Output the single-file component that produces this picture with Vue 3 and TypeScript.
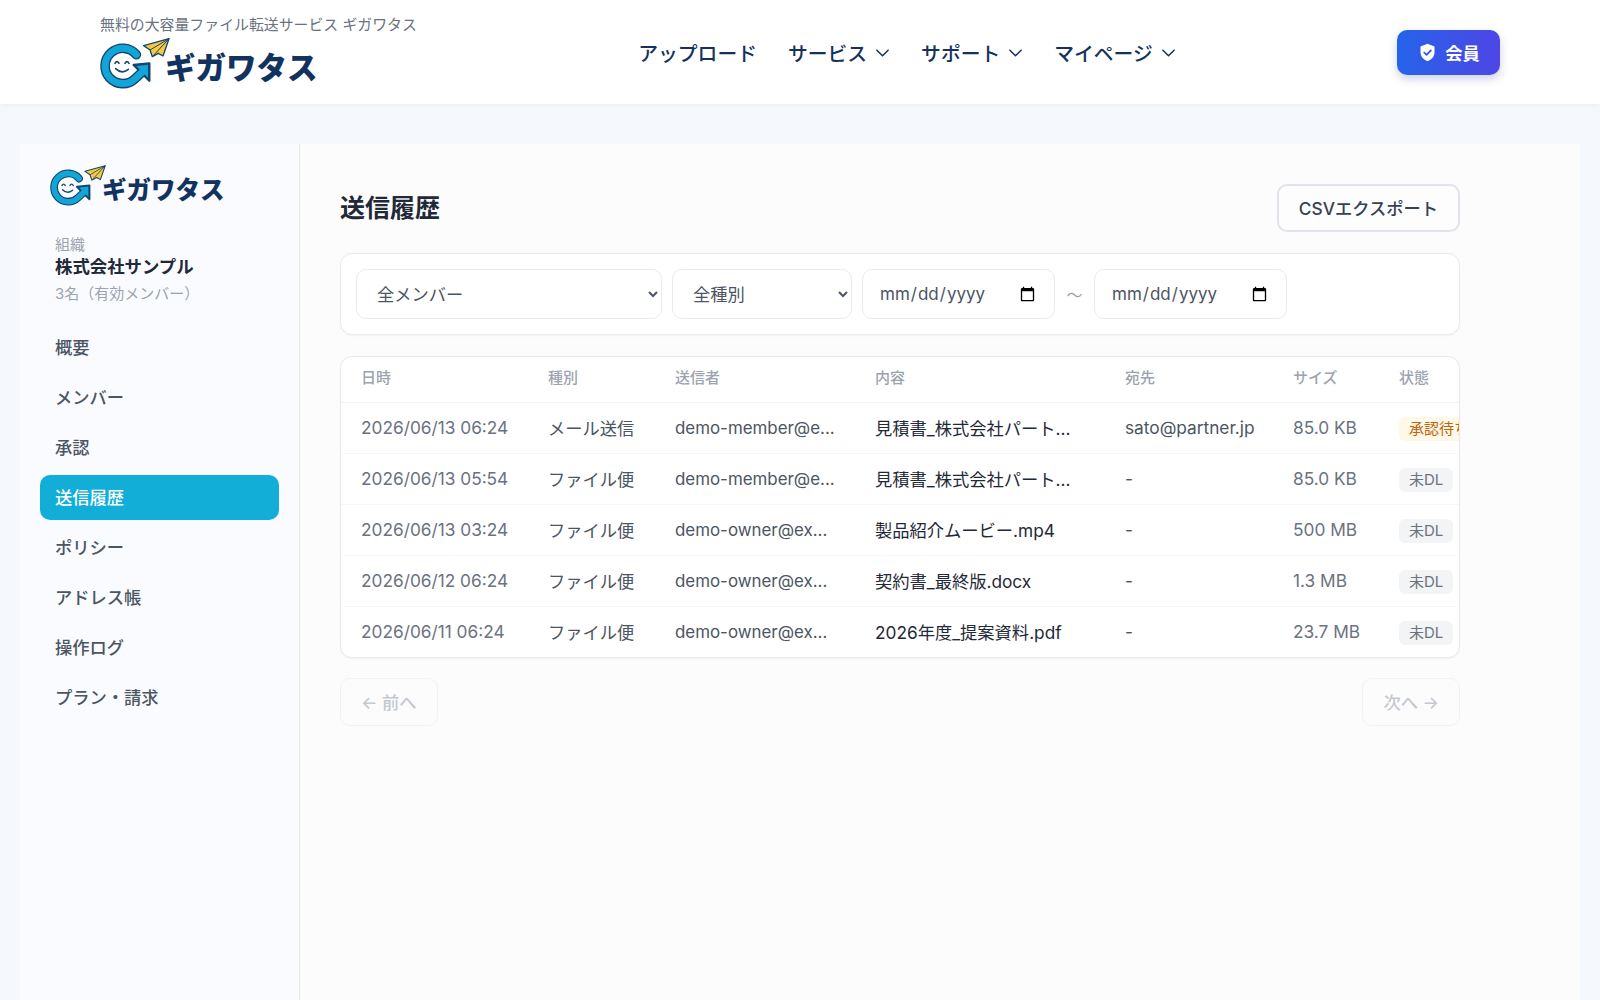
<script setup lang="ts">
interface Row { date: string; kind: string; sender: string; content: string; to: string; size: string; status: string; warn?: boolean }
const navItems = [
  { label: 'アップロード', menu: false },
  { label: 'サービス', menu: true },
  { label: 'サポート', menu: true },
  { label: 'マイページ', menu: true },
]
const sideItems = ['概要', 'メンバー', '承認', '送信履歴', 'ポリシー', 'アドレス帳', '操作ログ', 'プラン・請求']
const heads = ['日時', '種別', '送信者', '内容', '宛先', 'サイズ', '状態']
const rows: Row[] = [
  { date: '2026/06/13 06:24', kind: 'メール送信', sender: 'demo-member@e...', content: '見積書_株式会社パート...', to: 'sato@partner.jp', size: '85.0 KB', status: '承認待ち', warn: true },
  { date: '2026/06/13 05:54', kind: 'ファイル便', sender: 'demo-member@e...', content: '見積書_株式会社パート...', to: '-', size: '85.0 KB', status: '未DL' },
  { date: '2026/06/13 03:24', kind: 'ファイル便', sender: 'demo-owner@ex...', content: '製品紹介ムービー.mp4', to: '-', size: '500 MB', status: '未DL' },
  { date: '2026/06/12 06:24', kind: 'ファイル便', sender: 'demo-owner@ex...', content: '契約書_最終版.docx', to: '-', size: '1.3 MB', status: '未DL' },
  { date: '2026/06/11 06:24', kind: 'ファイル便', sender: 'demo-owner@ex...', content: '2026年度_提案資料.pdf', to: '-', size: '23.7 MB', status: '未DL' },
]
</script>

<template>
  <div class="page">
    <header class="topbar">
      <div class="topbar-inner">
        <div class="brand">
          <p class="tagline">無料の大容量ファイル転送サービス ギガワタス</p>
          <div class="logo logo-lg">
            <svg class="mark" viewBox="0 0 270 180" aria-hidden="true">
              <g id="gmark">
                <path d="M124 62A53 53 0 1 0 120 134L146 110" fill="none" stroke="#12466e" stroke-width="29" stroke-linecap="round" stroke-linejoin="round" />
                <path d="M163 88 116 93 163 140Z" fill="#12466e" stroke="#12466e" stroke-width="7" stroke-linejoin="round" />
                <path d="M124 62A53 53 0 1 0 120 134L146 110" fill="none" stroke="#12a5d8" stroke-width="21" stroke-linecap="round" stroke-linejoin="round" />
                <path d="M159 92 124 96 159 131Z" fill="#12a5d8" />
                <path d="M60 88Q66 78 72 88M90 88Q96 78 102 88M62 104Q80 122 100 106" fill="none" stroke="#12466e" stroke-width="5" stroke-linecap="round" />
                <path d="M222 14 146 35 165 48 172 68 190 58 204 66Z" fill="#f8c93e" stroke="#12466e" stroke-width="4" stroke-linejoin="round" />
                <path d="M222 14 165 48M222 14 172 68" fill="none" stroke="#12466e" stroke-width="3" />
              </g>
            </svg>
            <span class="logo-text">ギガワタス</span>
          </div>
        </div>
        <nav class="topnav">
          <a v-for="item in navItems" :key="item.label" class="topnav-link">
            {{ item.label }}
            <svg v-if="item.menu" class="chev" viewBox="0 0 16 16" aria-hidden="true"><path d="M2 5.500 8 11.500l6-6" fill="none" stroke="currentColor" stroke-width="1.6" stroke-linecap="round" stroke-linejoin="round" /></svg>
          </a>
        </nav>
        <button class="member" type="button">
          <svg class="shield" viewBox="0 0 24 24" aria-hidden="true">
            <path d="M12 2 20 5v6.500c0 5-3.300 8.800-8 10.500-4.700-1.700-8-5.500-8-10.500V5Z" fill="#fff" />
            <path d="m8.200 12 2.700 2.700 5-5.200" fill="none" stroke="#3257e6" stroke-width="2" stroke-linecap="round" stroke-linejoin="round" />
          </svg>
          会員
        </button>
      </div>
    </header>

    <div class="shell">
      <aside class="sidebar">
        <div class="logo logo-sm">
          <svg class="mark" viewBox="0 0 270 180" aria-hidden="true"><use href="#gmark" /></svg>
          <span class="logo-text">ギガワタス</span>
        </div>
        <div class="org">
          <div class="org-label">組織</div>
          <div class="org-name">株式会社サンプル</div>
          <div class="org-count">3名（有効メンバー）</div>
        </div>
        <nav class="sidenav">
          <a v-for="item in sideItems" :key="item" class="sidenav-link" :class="{ active: item === '送信履歴' }">{{ item }}</a>
        </nav>
      </aside>

      <main class="content">
        <div class="content-inner">
          <div class="title-row">
            <h1>送信履歴</h1>
            <button class="export" type="button">CSVエクスポート</button>
          </div>
          <div class="filters">
            <select class="field sel-member"><option>全メンバー</option></select>
            <select class="field sel-kind"><option>全種別</option></select>
            <input class="field date" type="date" />
            <span class="tilde">〜</span>
            <input class="field date" type="date" />
          </div>
          <div class="table-card">
            <table>
              <colgroup>
                <col class="c1" /><col class="c2" /><col class="c3" /><col class="c4" /><col class="c5" /><col class="c6" /><col class="c7" />
              </colgroup>
              <thead>
                <tr><th v-for="h in heads" :key="h">{{ h }}</th></tr>
              </thead>
              <tbody>
                <tr v-for="r in rows" :key="r.date">
                  <td class="muted">{{ r.date }}</td>
                  <td class="mid">{{ r.kind }}</td>
                  <td class="mid sender">{{ r.sender }}</td>
                  <td class="dark">{{ r.content }}</td>
                  <td class="mid">{{ r.to }}</td>
                  <td class="muted">{{ r.size }}</td>
                  <td><span class="badge" :class="{ warn: r.warn }">{{ r.status }}</span></td>
                </tr>
              </tbody>
            </table>
          </div>
          <div class="pager">
            <button class="pager-btn" type="button" disabled>← 前へ</button>
            <button class="pager-btn" type="button" disabled>次へ →</button>
          </div>
        </div>
      </main>
    </div>
  </div>
</template>

<style>
html, body { margin: 0; background: #f5f8fc; }
</style>

<style scoped>
.page {
  min-height: 1000px;
  height: 1000px;
  overflow: hidden;
  display: flex;
  flex-direction: column;
  background: #f5f8fc;
  font-family: Inter, "Noto Sans CJK JP", sans-serif;
  font-size: 17.28px;
  color: #374151;
}
.topbar {
  height: 104px;
  flex: none;
  background: #fff;
  box-shadow: 0 1px 6px rgba(30, 50, 90, 0.06);
}
.topbar-inner {
  width: 1400px;
  height: 100%;
  margin: 0 auto;
  display: flex;
  align-items: center;
  justify-content: space-between;
}
.brand { width: 317px; padding-bottom: 2.5px; }
.tagline {
  margin: 0;
  font-size: 14.9px;
  line-height: 20px;
  color: #6b7280;
  white-space: nowrap;
}
.logo { display: flex; align-items: center; }
.logo-text { font-weight: 900; color: #12335f; white-space: nowrap; }
.logo-lg { height: 46px; margin-top: 6.5px; }
.logo-lg .mark { width: 90px; height: 60px; margin-left: -5px; flex: none; }
.logo-lg .logo-text { font-size: 30.500px; margin-left: -20px; margin-top: 4px; }
.logo-sm { height: 44px; }
.logo-sm .mark { width: 72px; height: 48px; margin-left: 6px; flex: none; }
.logo-sm .logo-text { font-size: 24.500px; margin-left: -16px; margin-top: 4px; }
.topnav { display: flex; align-items: center; gap: 31px; }
.topnav-link {
  display: flex;
  align-items: center;
  gap: 8px;
  font-size: 19.8px;
  font-weight: 500;
  color: #15325c;
  white-space: nowrap;
}
.chev { width: 15px; height: 15px; }
.member {
  width: 103px;
  height: 45px;
  border: 0;
  border-radius: 10px;
  background: linear-gradient(90deg, #2563eb, #4f46e5);
  box-shadow: 0 4px 8px rgba(50, 70, 160, 0.25);
  color: #fff;
  font: 700 17.28px Inter, "Noto Sans CJK JP", sans-serif;
  display: flex;
  align-items: center;
  justify-content: center;
  gap: 7px;
}
.shield { width: 21px; height: 21px; }
.shell { flex: 1; display: flex; padding: 40px 20px 0; min-height: 0; }
.sidebar {
  width: 280px;
  box-sizing: border-box;
  flex: none;
  background: #fafbfe;
  border-right: 1px solid #e5e7eb;
  padding: 20px 20px 0;
}
.org { margin: 26px 0 0 15px; }
.org-label { font-size: 15px; line-height: 21px; color: #9ca3af; }
.org-name { font-size: 17.4px; line-height: 24px; font-weight: 700; color: #1f2937; }
.org-count { font-size: 15px; line-height: 30px; color: #9ca3af; }
.sidenav { margin-top: 16px; display: flex; flex-direction: column; gap: 5px; }
.sidenav-link {
  height: 45px;
  line-height: 45px;
  padding-left: 15px;
  border-radius: 10px;
  font-weight: 500;
  color: #4b5563;
}
.sidenav-link.active { background: #12aed8; color: #fff; }
.content { flex: 1; background: #fcfcfd; padding: 40px; min-width: 0; }
.content-inner { width: 1120px; }
.title-row { display: flex; align-items: center; justify-content: space-between; }
h1 { margin: 0; padding-bottom: 4px; font-size: 25px; font-weight: 700; color: #1f2937; }
.export {
  height: 48px;
  padding: 0 20px 2px;
  background: #fdfdfe;
  border: 2px solid #e0e3ea;
  border-radius: 10px;
  font: 500 17.28px Inter, "Noto Sans CJK JP", sans-serif;
  color: #374151;
}
.filters {
  margin-top: 21px;
  box-sizing: border-box;
  height: 82px;
  display: flex;
  align-items: center;
  gap: 10px;
  padding: 0 15px;
  background: #fff;
  border: 1px solid #e8eaef;
  border-radius: 12px;
  box-shadow: 0 1px 2px rgba(0, 0, 0, 0.03);
}
.field {
  box-sizing: border-box;
  height: 50px;
  background: #fff;
  border: 1px solid #e9ebf0;
  border-radius: 10px;
  font: 400 17.28px Inter, "Noto Sans CJK JP", sans-serif;
  color: #4b5563;
}
.sel-member { width: 306px; padding-left: 16px; }
.sel-kind { width: 180px; padding-left: 16px; }
.date { width: 193px; padding: 0 16px; font-size: 17px; }
.tilde { color: #9ca3af; width: 19px; text-align: center; font-size: 16px; white-space: nowrap; }
.table-card {
  margin-top: 21px;
  background: #fff;
  border: 1px solid #e8eaef;
  border-radius: 12px;
  overflow: hidden;
  box-shadow: 0 1px 2px rgba(0, 0, 0, 0.05);
}
table { width: 1160px; border-collapse: collapse; table-layout: fixed; }
.c1 { width: 187px; }
.c2 { width: 127px; }
.c3 { width: 200px; }
.c4 { width: 250px; }
.c5 { width: 168px; }
.c6 { width: 106px; }
.c7 { width: 122px; }
th {
  height: 45px;
  padding: 0 0 5px 20px;
  box-sizing: border-box;
  text-align: left;
  font-size: 15px;
  font-weight: 500;
  color: #9ca3af;
  border-bottom: 1px solid #f3f4f6;
}
td {
  height: 51px;
  padding: 0 0 0 20px;
  box-sizing: border-box;
  white-space: nowrap;
  border-bottom: 1px solid #f6f7f9;
}
tbody tr:last-child td { border-bottom: 0; }
.muted { color: #6b7280; }
.mid { color: #4b5563; }
.sender { font-size: 16.9px; }
.dark { color: #1f2937; }
.badge {
  display: inline-block;
  height: 24px;
  line-height: 24px;
  margin-top: 2px;
  padding: 0 10px;
  border-radius: 6px;
  background: #f3f4f6;
  color: #6b7280;
  font-size: 15px;
  white-space: nowrap;
  vertical-align: middle;
}
.badge.warn { background: #fef9e7; color: #c2620f; }
.pager { margin-top: 20px; display: flex; justify-content: space-between; }
.pager-btn {
  height: 48px;
  padding: 0 20px 2px;
  background: transparent;
  border: 1px solid #f1f2f5;
  border-radius: 10px;
  font: 500 17.28px Inter, "Noto Sans CJK JP", sans-serif;
  color: #c4c8d0;
}
</style>
